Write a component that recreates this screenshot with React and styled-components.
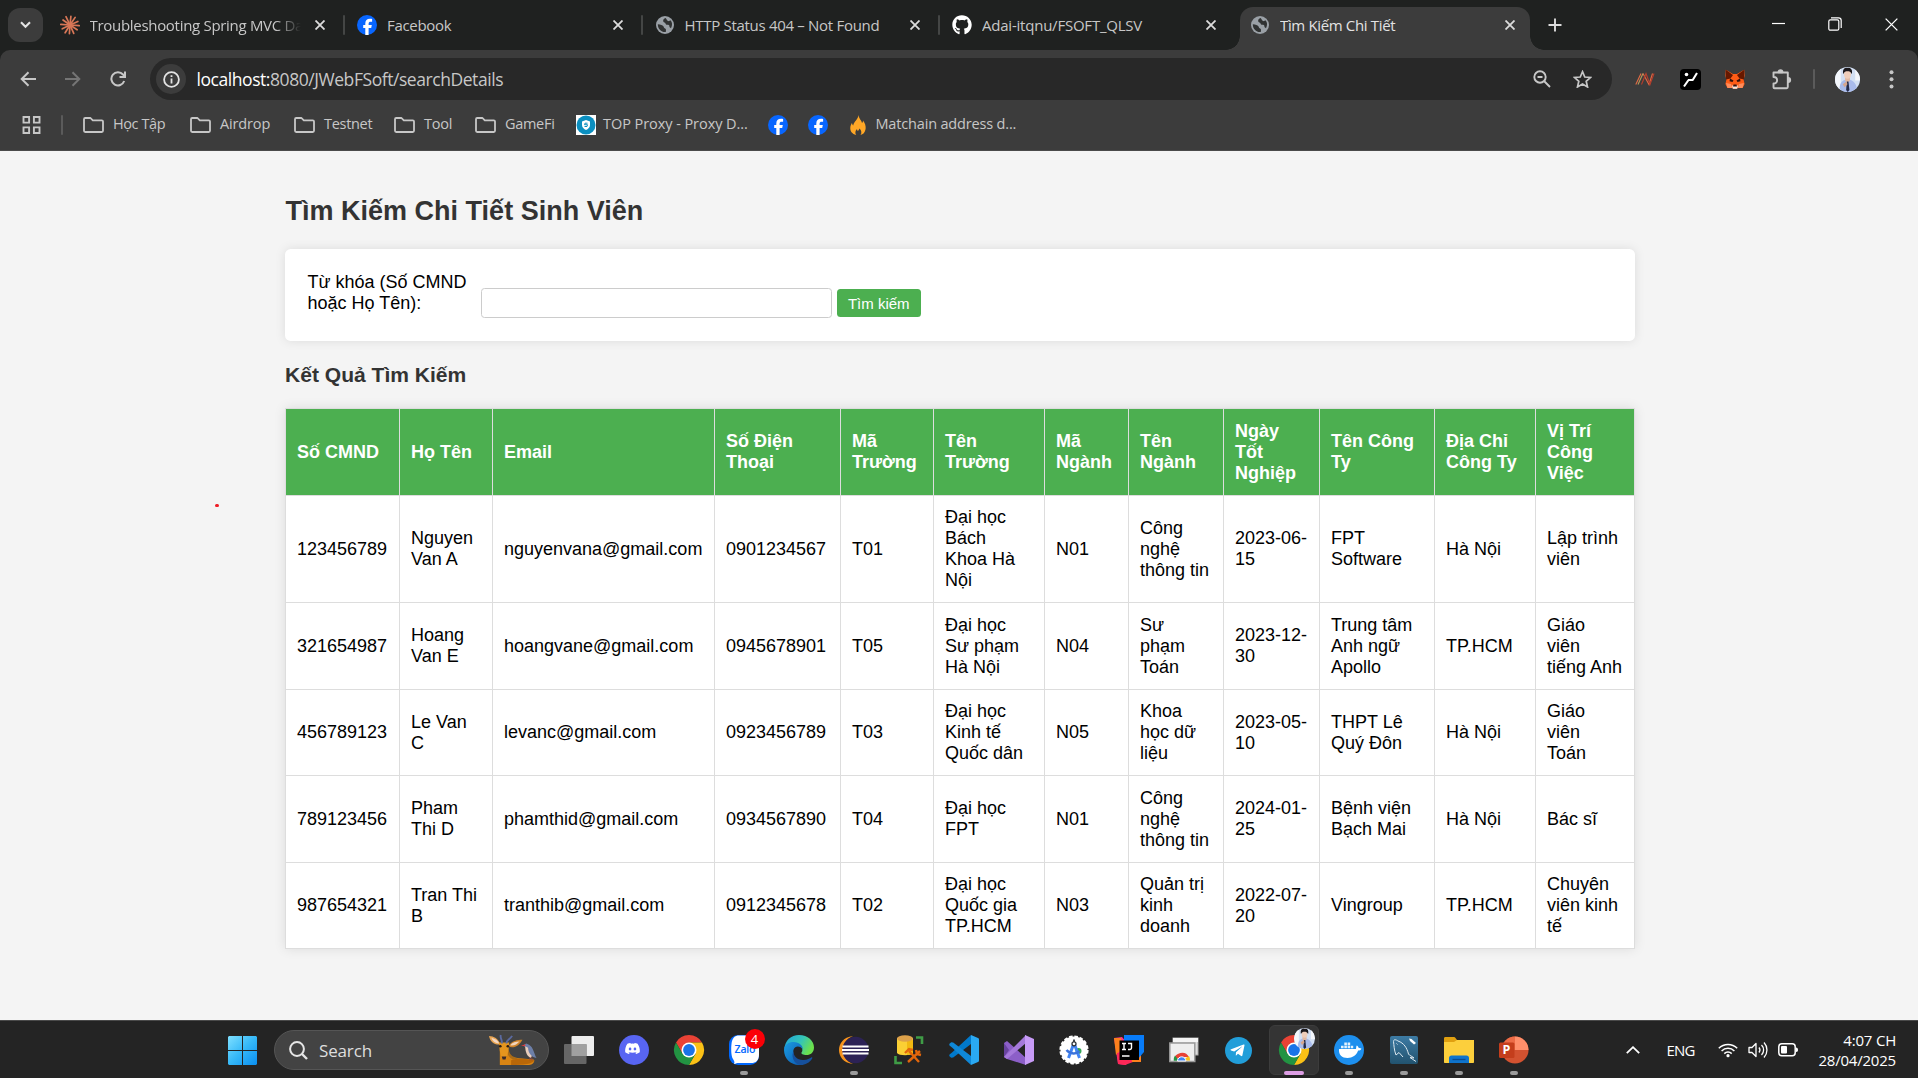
import React from "react";
import styled, { createGlobalStyle, css } from "styled-components";
import { FaGithub, FaDiscord, FaTelegramPlane, FaDocker } from "react-icons/fa";

const GlobalStyle = createGlobalStyle`
  html, body { margin: 0; padding: 0; overflow: hidden; }
  *, *::before, *::after { box-sizing: border-box; }
  svg { display: block; flex: none; }
`;

const uiFont = '"Open Sans", "Noto Sans", sans-serif';
const pageFont = '"Liberation Sans", Arial, sans-serif';

const Screen = styled.div`
  width: 1918px;
  height: 1078px;
  display: flex;
  flex-direction: column;
  background: #f4f4f4;
  font-family: ${uiFont};
`;

/* ---------- browser chrome ---------- */

const TabStrip = styled.div`
  height: 50px;
  display: flex;
  background: #1f2120;
`;

const TabSearch = styled.div`
  width: 35px;
  height: 34px;
  margin: 8px 3.5px 0 8px;
  border-radius: 12px;
  background: #3c3c3c;
  display: grid;
  place-items: center;
`;

const TabBox = styled.div`
  position: relative;
  flex: none;
  width: ${(p) => p.$w || 297.5}px;
  height: ${(p) => (p.$active ? 43 : 50)}px;
  margin-top: ${(p) => (p.$active ? 7 : 0)}px;
  margin-left: ${(p) => p.$ml || 0}px;
  padding: ${(p) => (p.$active ? "0 15px 7px 10px" : "0 19px 0 13px")};
  display: flex;
  align-items: center;
  color: ${(p) => (p.$active ? "#e3e3e3" : "#c7c7c7")};
  ${(p) =>
    p.$active
      ? css`
          background: #3c3c3c;
          border-radius: 13px 13px 0 0;
          &::before,
          &::after {
            content: "";
            position: absolute;
            bottom: 0;
            width: 14px;
            height: 14px;
          }
          &::before {
            left: -14px;
            background: radial-gradient(circle at 0 0, transparent 13.5px, #3c3c3c 14px);
          }
          &::after {
            right: -14px;
            background: radial-gradient(circle at 100% 0, transparent 13.5px, #3c3c3c 14px);
          }
        `
      : ""}
  ${(p) =>
    p.$divider
      ? css`
          &::after {
            content: "";
            position: absolute;
            right: -1px;
            top: 15px;
            width: 2px;
            height: 20px;
            border-radius: 1px;
            background: #444645;
          }
        `
      : ""}
`;

const TabTitle = styled.span`
  flex: 1;
  margin-left: 10px;
  margin-right: 14px;
  font-size: 15px;
  letter-spacing: ${(p) => p.$ls ?? -0.3}px;
  white-space: nowrap;
  overflow: hidden;
  ${(p) =>
    p.$fade ? "-webkit-mask-image: linear-gradient(90deg, #000 88%, transparent 100%);" : ""}
`;

const NewTab = styled.div`
  width: 24px;
  margin-left: 13px;
  display: grid;
  place-items: center;
`;

const WindowButtons = styled.div`
  margin-left: auto;
  margin-right: -1.5px;
  display: flex;
  align-items: center;
  height: 48px;
`;

const WindowButton = styled.div`
  width: 56.5px;
  display: grid;
  place-items: center;
`;

const ToolbarBack = styled.div`
  background: #1f2120;
`;

const Toolbar = styled.div`
  height: 101px;
  background: #3c3c3c;
  border-radius: 10px 10px 0 0;
  display: flex;
  flex-direction: column;
  border-bottom: 1px solid #4a4a4a;
`;

const NavRow = styled.div`
  height: 50px;
  padding-top: 8px;
  display: flex;
`;

const NavIcon = styled.div`
  flex: none;
  width: ${(p) => p.$w || 45}px;
  height: 42px;
  display: grid;
  place-items: center;
`;

const NavButtons = styled.div`
  flex: none;
  width: 150px;
  padding-left: 5px;
  display: flex;
`;

const Omnibox = styled.div`
  flex: none;
  width: 1462px;
  height: 42px;
  border-radius: 21px;
  background: #282828;
  display: flex;
  align-items: center;
  padding: 0 10px 0 6px;
`;

const SiteInfo = styled.div`
  width: 30px;
  height: 30px;
  border-radius: 50%;
  background: #3c3c3c;
  display: grid;
  place-items: center;
`;

const Url = styled.div`
  flex: 1;
  margin-left: 10.5px;
  font-size: 17.5px;
  line-height: 24px;
  letter-spacing: -0.44px;
  color: #c7c7c7;
  b {
    font-weight: 400;
    color: #fff;
  }
`;

const Extensions = styled.div`
  flex: none;
  display: flex;
  align-items: center;
  height: 42px;
  margin-left: 10.5px;
`;

const BookmarkBar = styled.div`
  height: 50px;
  display: flex;
  align-items: center;
  padding-left: 22px;
`;

const BarDivider = styled.div`
  width: 2px;
  height: 20px;
  border-radius: 1px;
  background: #5b5b5b;
  margin: ${(p) => p.$m || "0"};
`;

const Bookmark = styled.div`
  width: ${(p) => p.$w}px;
  display: flex;
  align-items: center;
  gap: ${(p) => p.$gap ?? 9.5}px;
  font-size: 14.5px;
  line-height: 18px;
  letter-spacing: ${(p) => p.$ls ?? -0.3}px;
  white-space: nowrap;
  color: #c7c7c7;
`;

const BookmarkName = styled.span`
  margin-top: -2px;
`;

/* ---------- web page ---------- */

const Page = styled.main`
  position: relative;
  height: 869px;
  padding: 22.5px 0 0 285px;
  background: #f4f4f4;
  font-family: ${pageFont};
  font-size: 18px;
  line-height: 21px;
  color: #000;
`;

const Container = styled.div`
  width: 1350px;
  display: flex;
  flex-direction: column;
`;

const Heading = styled.h2`
  margin: 22.4px 0;
  padding-left: 0.6px;
  font-size: 27px;
  line-height: 31px;
  color: #333;
`;

const SubHeading = styled.h3`
  margin: 21.3px 0 21.7px;
  font-size: 21.06px;
  line-height: 24px;
  color: #333;
`;

const SearchForm = styled.form`
  height: 92px;
  padding: 22.5px;
  display: flex;
  align-items: flex-start;
  background: #fff;
  border-radius: 5.6px;
  box-shadow: 0 0 11px rgba(0, 0, 0, 0.1);
`;

const FieldLabel = styled.label`
  width: 168.75px;
  margin-right: 5px;
`;

const TextInput = styled.input`
  width: 350.5px;
  height: 30px;
  margin: 16px 5px 0 0;
  padding: 5px;
  border: 1px solid #ccc;
  border-radius: 3.5px;
  font: 15px ${pageFont};
  outline: none;
`;

const SubmitButton = styled.button`
  width: 84px;
  height: 28px;
  margin-top: 17.5px;
  padding: 0;
  border: 0;
  border-radius: 3.5px;
  background: #4caf50;
  color: #fff;
  font: 15px ${pageFont};
`;

const Table = styled.table`
  width: 1350px;
  table-layout: fixed;
  border-collapse: collapse;
  background: #fff;
  box-shadow: 0 0 11px rgba(0, 0, 0, 0.1);
`;

const Row = styled.tr`
  height: ${(p) => p.$h}px;
`;

const cell = css`
  padding: 0 0 0 11px;
  border: 1px solid #ddd;
  text-align: left;
  vertical-align: middle;
  white-space: pre;
`;

const HeadCell = styled.th`
  ${cell}
  background: #4caf50;
  color: #fff;
`;

const Cell = styled.td`
  ${cell}
`;

const LaserDot = styled.span`
  position: absolute;
  left: 215px;
  top: 352.5px;
  width: 3.5px;
  height: 3.5px;
  border-radius: 50%;
  background: #ee1c25;
`;

/* ---------- taskbar ---------- */

const Taskbar = styled.footer`
  height: 58px;
  display: flex;
  align-items: center;
  background: #242424;
  border-top: 1px solid #4a4a4a;
  padding: 1px 22px 0 228px;
`;

const SearchBox = styled.div`
  width: 275px;
  height: 40px;
  margin-left: 17px;
  margin-right: 2px;
  padding: 0 10px 0 14px;
  border-radius: 20px;
  border: 1px solid #555;
  background: #434343;
  display: flex;
  align-items: center;
  gap: 11px;
  color: #dedede;
  font-size: 17px;
  letter-spacing: -0.15px;
  svg:last-child {
    margin-left: auto;
  }
`;

const AppSlot = styled.div`
  position: relative;
  flex: none;
  width: 55px;
  height: 50px;
  display: grid;
  place-items: center;
  &::before {
    content: "";
    position: absolute;
    inset: 0 2.5px;
    border-radius: 6px;
    background: ${(p) => (p.$active ? "#343434" : "transparent")};
    border: 1px solid ${(p) => (p.$active ? "#3c3c3c" : "transparent")};
  }
  &::after {
    content: "";
    position: absolute;
    bottom: 0.5px;
    width: ${(p) => (p.$active ? 20 : p.$open ? 8 : 0)}px;
    height: 4px;
    border-radius: 2px;
    background: ${(p) => (p.$active ? "#dd9ee4" : "#9a9a9a")};
  }
  svg {
    position: relative;
    overflow: visible;
  }
`;

const Badge = styled.span`
  position: absolute;
  left: 28.5px;
  top: 4px;
  width: 20px;
  height: 20px;
  border-radius: 50%;
  background: #fb0007;
  color: #fff;
  font-size: 13px;
  line-height: 20px;
  text-align: center;
`;

const Tray = styled.div`
  margin-left: auto;
  display: flex;
  align-items: center;
  color: #fff;
  font-size: 15px;
`;

const Language = styled.span`
  margin: 0 17.5px 0 26.5px;
  width: 34px;
  font-size: 15px;
  letter-spacing: -0.8px;
`;

const TrayIcons = styled.div`
  display: flex;
  align-items: center;
  gap: 10px;
`;

const Clock = styled.div`
  width: 98px;
  text-align: right;
  line-height: 20px;
  font-size: 15px;
  letter-spacing: -0.2px;
  margin-top: -1px;
`;

/* ---------- icons ---------- */

const Claude = () => (
  <svg width="20" height="20" viewBox="-10 -10 20 20" stroke="#d97757" strokeWidth="1.7" strokeLinecap="round">
    {[0, 30, 62, 90, 118, 150, 180, 212, 240, 272, 300, 332].map((a, i) => (
      <line key={a} x1="0" y1="0" x2={i % 2 ? 8.6 : 9.2} y2="0" transform={`rotate(${a + 4})`} />
    ))}
  </svg>
);

const Facebook = () => (
  <svg width="20" height="20" viewBox="0 0 20 20">
    <circle cx="10" cy="10" r="10" fill="#0866ff" />
    <path d="M8.3 20v-6.9H6.2v-3h2.1V8.7c0-3.3 1.5-4.9 4.8-4.9.6 0 1.5.1 2 .3v2.7h-1.2c-1.7 0-2.3.6-2.3 2.2v1.1h3.2l-.6 3h-2.6V20z" fill="#fff" />
  </svg>
);

const Globe = () => (
  <svg width="20" height="20" viewBox="0 0 20 20">
    <circle cx="10" cy="10" r="9" fill="#9aa0a6" />
    <path d="M2.8 9.2c3 .2 4.6.8 5.6 2 .8 1 .2 1.8 1.7 2.2 1.2.3.9 1.6.7 3.6-4.5.4-8-3-8-7.8zM10.7 3c-1.8.7-2.8 1.8-2.5 3.2.3 1.3 2 1 2.3 2.2.3 1.1 1 1.5 2.2 1.3 1.5-.2 2 1 1.7 2.3l1.6 1.2c1.5-2.7 1.4-5.5-.2-7.6-1.3 0-1.6.8-2.7.5-1.3-.4-1.3-2-2.4-3.1z" fill="#303232" />
  </svg>
);

const Close = ({ size = 10, w = 1.8, color = "#dcdcdc" }) => (
  <svg width={size} height={size} viewBox="0 0 10 10" stroke={color} strokeWidth={w}>
    <path d="M.5.5l9 9M9.5.5l-9 9" />
  </svg>
);

const Folder = () => (
  <svg width="21" height="16" viewBox="0 0 21 16" fill="none" stroke="#c7c7c7" strokeWidth="1.8" strokeLinejoin="round">
    <path d="M1 2.2C1 1.5 1.5 1 2.2 1h5.3l2.3 2.4h9c.7 0 1.2.5 1.2 1.2v9.2c0 .7-.5 1.2-1.2 1.2H2.2C1.5 15 1 14.5 1 13.8z" />
  </svg>
);

const Portrait = ({ size }) => (
  <svg width={size} height={size} viewBox="0 0 26 26">
    <defs>
      <clipPath id={`face${size}`}>
        <circle cx="13" cy="13" r="13" />
      </clipPath>
    </defs>
    <g clipPath={`url(#face${size})`}>
      <path fill="#d3e0f4" d="M0 0h26v26H0z" />
      <path fill="#f4f7fc" d="M0 0h6v26H0zM21 2h5v12h-5z" />
      <path d="M5 26c-1-8 1-12 8-13.500 7 1.500 10 5.500 10 13.500z" fill="#a9bbec" />
      <path d="M10.500 10h5v4l-2.500 3-2.500-3z" fill="#e2b9a2" />
      <ellipse cx="13" cy="7.500" rx="3.600" ry="4.600" fill="#efcdb9" />
      <path d="M8.600 7.500C7.500 2 10 .5 13 .8c3.800-.3 5.500 2 4.500 6.700-1-2.500-2.600-3-4.500-3s-3.500.5-4.400 3z" fill="#1c191c" />
      <path d="M12.300 15l1.700 0 1 9-1.800 2-1.600-2z" fill="#242a4a" />
      <path d="M8 18l4-3 1 3-3 3z" fill="#d6a68e" />
    </g>
  </svg>
);

const Chrome = ({ size = 30 }) => (
  <svg width={size} height={size} viewBox="0 0 30 30">
    <path d="M2 7.500A15 15 0 0 1 28 7.500H15L8.500 18.750z" fill="#e94235" />
    <path d="M28 7.500A15 15 0 0 1 15 30L21.500 18.750 15 7.500z" fill="#fbc116" />
    <path d="M15 30A15 15 0 0 1 2 7.500L8.500 18.750H21.500z" fill="#229342" />
    <circle cx="15" cy="15" r="7.500" fill="#fff" />
    <circle cx="15" cy="15" r="5.900" fill="#1a73e8" />
  </svg>
);

const Fox = () => (
  <svg width="20" height="20" viewBox="0 0 20 20">
    <path d="M.8.8L8 5h4l7.200-4.200.4 6-1 4 1 4.200-2 4-4-1-2 2H8.400l-2-2-4 1-2-4 1-4.200-1-4z" fill="#ff5c16" />
    <path d="M.8.8L8 6 5.500 9.500 1 10.500zM19.200.8L12 6l2.500 3.500 4.500 1z" fill="#661800" />
    <path d="M5 9.500l3.500 2-1 1.500-3-.8zM15 9.500l-3.500 2 1 1.500 3-.8z" fill="#33110d" />
    <path d="M1 14l5 1 1.500 4-5 0zM19 14l-5 1-1.500 4 5 0z" fill="#ff8d5d" />
    <path d="M7 16.500h6l-.8 3.200H7.800z" fill="#f2e6df" />
    <path d="M8.500 15.500h3l.5 2H8z" fill="#33110d" />
  </svg>
);

const Win = () => (
  <svg width="29" height="29" viewBox="0 0 29 29">
    <defs>
      <linearGradient id="win" x1="0" y1="0" x2="1" y2="1">
        <stop offset="0" stopColor="#7fe0ff" />
        <stop offset=".5" stopColor="#35b8f8" />
        <stop offset="1" stopColor="#0a8ef0" />
      </linearGradient>
    </defs>
    <path d="M1 0h13v14H0V1zM15 0h13l1 1v13H15zM0 15h14v14H1l-1-1zM15 15h14v13l-1 1H15z" fill="url(#win)" />
  </svg>
);

const Deer = () => (
  <svg width="50" height="32" viewBox="0 0 52 34">
    <path d="M12 33V15h9c1 8 5 11 15 11l12 1c2 3-2 6-6 6z" fill="#d98412" />
    <path d="M20 14c2 7 5 11 12 12l-6 1c-5-2-7-7-6-13z" fill="#242424" fillOpacity=".25" />
    <path d="M24 28c8-3 18-1 25 0-2 4-12 5-25 5z" fill="#b96708" />
    <path d="M.5 2c5 0 10 3 12 9-6 1-11-3-12-9z" fill="#e9a552" />
    <path d="M3 4c4 1 7 3 8.500 6C7 10 4.500 8 3 4z" fill="#f4d8c4" />
    <path d="M36 6c-5 0-12 1-15 7 6 3 12-1 15-7z" fill="#cf842b" />
    <path d="M33 8c-4 0-8 1-10 4 4 1 7-1 10-4z" fill="#f2d5bd" />
    <path d="M11 9h11l-1 9-2 8h-5l-2-8z" fill="#e5951e" />
    <path d="M14 10C15 6 12 5 13 1M19 10c0-4 4-4 6-8" stroke="#5b6aa0" strokeWidth="2" fill="none" />
    <circle cx="12.500" cy="13" r="1.400" fill="#2b1a10" />
    <circle cx="20.500" cy="13" r="1.400" fill="#2b1a10" />
    <path d="M14 24h5l-1 3h-3z" fill="#3b2a2a" />
    <path d="M37 12l3-2 3 1.500c5 3 5 9 8 14-5-1-9-4-10-9z" fill="#6d7fa8" />
    <path d="M39 13c0 6 2 11 6 12.500l1-2c-3-3-4-6-4-9z" fill="#e9cdbb" />
    <path d="M34.500 12.500l4.500-1.500v2z" fill="#e23b3b" />
    <path d="M44 25v3M46 25v3" stroke="#9c4a3a" />
  </svg>
);

const TaskView = () => (
  <svg width="30" height="28" viewBox="0 0 30 28">
    <rect x="7.500" y="0" width="22.500" height="20" rx="1" fill="#ededed" />
    <rect x="0" y="8" width="22.500" height="20" rx="1" fill="#666" />
    <rect x="7.500" y="8" width="15" height="12" fill="#a0a0a0" />
  </svg>
);

const Discord = () => (
  <svg width="30" height="30" viewBox="0 0 30 30">
    <circle cx="15" cy="15" r="15" fill="#5865f2" />
    <FaDiscord x="5.500" y="5.500" width="19" height="19" color="#fff" />
  </svg>
);

const Zalo = () => (
  <svg width="30" height="30" viewBox="0 0 30 30">
    <rect width="30" height="30" rx="9" fill="#0068ff" />
    <path d="M2.500 9C3 3 6 .5 10 .5h12c6 0 8 3 8 8v11c0 6-3 8.500-8 8.500H10c-2 0-3 .5-5 1 1-2 0-3-1-5-2-3-2-11-1.500-15z" fill="#fff" />
    <text x="5.500" y="17.500" fontFamily="Open Sans" fontWeight="600" fontSize="10.500" fill="#0068ff" textLength="21">
      Zalo
    </text>
  </svg>
);

const Edge = () => (
  <svg width="30" height="30" viewBox="0 0 30 30">
    <defs>
      <linearGradient id="eg1" x1="0" y1="0" x2="1" y2=".4">
        <stop offset="0" stopColor="#1fa5dd" />
        <stop offset=".6" stopColor="#35c5b6" />
        <stop offset="1" stopColor="#6be04d" />
      </linearGradient>
      <linearGradient id="eg2" x1="0" y1="0" x2="1" y2="1">
        <stop offset="0" stopColor="#1b9de2" />
        <stop offset="1" stopColor="#0b57b0" />
      </linearGradient>
    </defs>
    <path d="M.3 14C1 5.500 7 0 15 0c9 0 15 6 15 12.500 0 5-3.500 7.500-7.500 7.500-3.500 0-5.500-1-5-2.500 1.500-1.500 1.500-6-4-8C8 8 2 10 .3 14z" fill="url(#eg1)" />
    <path d="M0 15C0 9.500 5 7 9.500 7c6 0 9.500 4 9.300 7.500-1-2-3-3-5-3-4 0-5 4-4.300 7.500C10.500 24 15 28 19 29.500 9 32 0 25 0 15z" fill="url(#eg2)" />
    <path d="M9.700 16c-.8 5 4 9.500 10 9 3.500-.2 6-1.500 7.500-2.500.8-.5 1.400.2 1 1C25.500 28 20 30.500 16 30 9 28.500 7 20 9.700 16z" fill="#16509c" />
  </svg>
);

const Eclipse = () => (
  <svg width="30" height="28" viewBox="0 0 30 28">
    <path d="M14 0C4 1 0 8 0 14s4 13 14 14C7 25 4 20 4 14S7 3 14 0z" fill="#f7941e" />
    <circle cx="16.500" cy="14" r="13.200" fill="#2c2255" />
    <path d="M3.500 10.500h26M3 14h27M3.500 17.500h26" stroke="#fff" strokeWidth="2" />
  </svg>
);

const Database = () => (
  <svg width="30" height="30" viewBox="0 0 30 30">
    <path d="M3 3v15c2 3 14 3 16 0V3z" fill="#fbd034" />
    <path d="M13 5h6v14l-6 1z" fill="#f2b911" />
    <ellipse cx="11" cy="3.500" rx="8" ry="3.200" fill="#dda14a" />
    <path d="M22 2.500h6V9M1.500 21v7h6.500" stroke="#3f9c46" strokeWidth="2.600" fill="none" />
    <path d="M11 18l4-4 4 1M15 16l10 11M26 16L14 27M22 15l1 4 4 1" stroke="#e2660c" strokeWidth="2.400" fill="none" />
  </svg>
);

const VSCode = () => (
  <svg width="30" height="30" viewBox="0 0 30 30">
    <path d="M22 0L3 17.500.5 19.500.2 21l2 1.800 2-.2L22 9z" fill="#0179cb" />
    <path d="M22 30L3 12.500.5 10.500.2 9l2-1.800 2 .2L22 21z" fill="#0f88d8" />
    <path d="M22 0l7 3c.7.300 1 .8 1 1.500v21c0 .7-.3 1.200-1 1.500l-7 3z" fill="#2aa9f3" />
  </svg>
);

const VisualStudio = () => (
  <svg width="30" height="30" viewBox="0 0 30 30">
    <path d="M0 8l3-2 19 17v7L3 24l-3-2z" fill="#8c5fc8" />
    <path d="M0 8l5 7-5 7z" fill="#68439f" />
    <path d="M22 0v8L3 24l-3-2z" fill="#a579db" />
    <path d="M21 0l9 4v22l-9 4z" fill="#c79bf7" />
  </svg>
);

const AndroidStudio = () => (
  <svg width="30" height="30" viewBox="0 0 30 30">
    <circle cx="15" cy="15" r="13.500" fill="#fff" />
    <circle cx="15" cy="15" r="13.500" fill="none" stroke="#fff" strokeWidth="2.200" strokeDasharray="3.500 1.800" />
    <circle cx="19.500" cy="16" r="3" fill="#34a853" />
    <path d="M15 8L9.500 23M15 8l5.500 15" stroke="#4285f4" strokeWidth="3" />
    <path d="M7.500 15c4 4.500 10 4.500 13 1" stroke="#3b73db" strokeWidth="2.500" fill="none" />
    <circle cx="15" cy="8.800" r="2" fill="#fff" stroke="#30343a" strokeWidth="1.300" />
    <path d="M15 4.500v2.500" stroke="#30343a" strokeWidth="1.800" />
  </svg>
);

const IntelliJ = () => (
  <svg width="30" height="30" viewBox="0 0 30 30">
    <path d="M0 3l8-1 10 12-6 16-8-1z" fill="#ff318c" />
    <path d="M0 3l7 0 2 10-7 7z" fill="#fc801d" />
    <path d="M3 18l15-2 1 11-8 3-7-1z" fill="#fe2857" />
    <path d="M17 18h10v9h-9z" fill="#fc801d" />
    <path d="M10 0h20v17l-7 8-13-10z" fill="#087cfa" />
    <path d="M5.500 5.500h19.500v19.500H5.500z" fill="#000" />
    <path d="M8 8.500h4M10 8.500v6M8 14.500h4M14 8.500h3.500v4.500c0 1.200-1.500 1.700-3.500 1.500M8 21h7.500" stroke="#fff" strokeWidth="1.400" fill="none" />
  </svg>
);

const RemoteDesktop = () => (
  <svg width="30" height="26" viewBox="0 0 30 26">
    <rect x="4" y="1" width="25" height="17" fill="#ddd" stroke="#a8a8a8" />
    <path d="M4 1h25v4H4z" fill="#f4f4f4" />
    <rect x=".8" y="6" width="25" height="18.500" fill="#eee" stroke="#999" strokeWidth="1.500" />
    <path d="M5 23a8 8 0 0 1 15-3h-8z" fill="#e94235" />
    <path d="M20 19a8 8 0 0 1 1 4.500h-8z" fill="#fbc116" />
    <path d="M4.700 23.700A8 8 0 0 1 6 18.500l4 5.200z" fill="#229342" />
    <path d="M8.500 24a4.200 4.200 0 0 1 8.400 0z" fill="#4285f4" stroke="#fff" />
  </svg>
);

const Telegram = () => (
  <svg width="27" height="27" viewBox="0 0 27 27">
    <circle cx="13.500" cy="13.500" r="13.500" fill="#229ed9" />
    <FaTelegramPlane x="4.500" y="5.500" width="16" height="16" color="#fff" />
  </svg>
);

const ProfileChrome = () => (
  <svg width="30" height="30" viewBox="0 0 30 30">
    <Chrome />
    <g transform="translate(15 -7)">
      <Portrait size={21} />
    </g>
  </svg>
);

const Docker = () => (
  <svg width="30" height="30" viewBox="0 0 30 30">
    <circle cx="15" cy="15" r="15" fill="#1d8fee" />
    <path d="M5 14h17c.3-1.300 0-2.300.8-3.500 1.200.7 1.700 1.500 1.900 2.600 1-.1 2 0 2.800.6-.7 1.300-1.800 1.900-3.400 1.900C22.500 20.500 18.500 23 13.500 23 8 23 4.500 20 5 14z" fill="#fff" />
    <path d="M7 10.700h2.600v2.600H7zM10.300 10.700h2.600v2.600h-2.600zM13.600 10.700h2.600v2.600h-2.600zM16.900 10.700h2.300v2.600h-2.300zM10.300 7.600h2.600v2.600h-2.600zM13.600 7.600h2.600v2.600h-2.600z" fill="#e4f2fd" />
  </svg>
);

const MySQL = () => (
  <svg width="28" height="28" viewBox="0 0 28 28">
    <defs>
      <linearGradient id="my" x1="0" y1="0" x2="0" y2="1">
        <stop offset="0" stopColor="#3d7ba4" />
        <stop offset="1" stopColor="#22536f" />
      </linearGradient>
    </defs>
    <rect width="28" height="28" rx="2" fill="url(#my)" />
    <path d="M6 19C4 14 4 9 3.500 5.500 3.500 3 6 3.500 8 5c6 2 9 7 10.500 13 1 2 4 2 5.500 4l-4-.5 6 4M6 19l3-2.500L13 21M6.500 7.500l1 1" stroke="#dbe8ef" strokeWidth="1" fill="none" />
    <path d="M19 2.500l2.500.5 4.500 4-2 1.500-4-3.500z" fill="#fff" />
  </svg>
);

const Explorer = () => (
  <svg width="30" height="27" viewBox="0 0 30 27">
    <path d="M0 1.500C0 .5.500 0 1.500 0h8c1 0 1.500.3 2 1l1.500 2v6H0z" fill="#e0a010" />
    <path d="M0 5h10l3-2h17v22c0 .6-.4 1-1 1H1c-.6 0-1-.4-1-1z" fill="#fccf3c" />
    <path d="M5 26v-5c0-1.500 1-2.500 2.500-2.500h15c1.500 0 2.500 1 2.500 2.500v5z" fill="#0f74cc" />
    <path d="M8.500 22.500h13" stroke="#094b91" strokeWidth="1.300" />
  </svg>
);

const PowerPoint = () => (
  <svg width="30" height="28" viewBox="0 0 30 28">
    <circle cx="16" cy="14" r="13.500" fill="#d35230" />
    <path d="M16 .5A13.500 13.500 0 0 1 29.500 14H16z" fill="#ff8f6b" />
    <path d="M16 .5V14H2.500A13.500 13.500 0 0 1 16 .5z" fill="#ed6c47" />
    <rect x="0" y="6.500" width="15.500" height="15.500" rx="1.500" fill="#c43e1c" />
    <text x="7.500" y="18.300" textAnchor="middle" fontFamily="Open Sans" fontWeight="700" fontSize="12.500" fill="#fff">
      P
    </text>
  </svg>
);

/* ---------- data ---------- */

const tabs = [
  { icon: <Claude />, title: "Troubleshooting Spring MVC Data", fade: true, divider: true },
  { icon: <Facebook />, title: "Facebook", divider: true },
  { icon: <Globe />, title: "HTTP Status 404 – Not Found", divider: true },
  { icon: <FaGithub size={20} color="#fff" />, title: "Adai-itqnu/FSOFT_QLSV", w: 296, ls: -0.22 },
];

const folders = [
  ["Học Tập", 107, -0.4],
  ["Airdrop", 104, -0.15],
  ["Testnet", 100, -0.3],
  ["Tool", 81, -0.25],
  ["GameFi", 101, -0.3],
];

const columnWidths = [114, 93, 222, 126, 93, 111, 84, 95, 96, 115, 101, 99];

const headers = [
  "Số CMND", "Họ Tên", "Email", "Số Điện\nThoại", "Mã\nTrường", "Tên\nTrường",
  "Mã\nNgành", "Tên\nNgành", "Ngày\nTốt\nNghiệp", "Tên Công\nTy", "Địa Chỉ\nCông Ty", "Vị Trí\nCông\nViệc",
];

const students = [
  { h: 107, cells: ["123456789", "Nguyen\nVan A", "nguyenvana@gmail.com", "0901234567", "T01", "Đại học\nBách\nKhoa Hà\nNội", "N01", "Công\nnghệ\nthông tin", "2023-06-\n15", "FPT\nSoftware", "Hà Nội", "Lập trình\nviên"] },
  { h: 87, cells: ["321654987", "Hoang\nVan E", "hoangvane@gmail.com", "0945678901", "T05", "Đại học\nSư phạm\nHà Nội", "N04", "Sư\nphạm\nToán", "2023-12-\n30", "Trung tâm\nAnh ngữ\nApollo", "TP.HCM", "Giáo\nviên\ntiếng Anh"] },
  { h: 86, cells: ["456789123", "Le Van\nC", "levanc@gmail.com", "0923456789", "T03", "Đại học\nKinh tế\nQuốc dân", "N05", "Khoa\nhọc dữ\nliệu", "2023-05-\n10", "THPT Lê\nQuý Đôn", "Hà Nội", "Giáo\nviên\nToán"] },
  { h: 87, cells: ["789123456", "Pham\nThi D", "phamthid@gmail.com", "0934567890", "T04", "Đại học\nFPT", "N01", "Công\nnghệ\nthông tin", "2024-01-\n25", "Bệnh viện\nBạch Mai", "Hà Nội", "Bác sĩ"] },
  { h: 86, cells: ["987654321", "Tran Thi\nB", "tranthib@gmail.com", "0912345678", "T02", "Đại học\nQuốc gia\nTP.HCM", "N03", "Quản trị\nkinh\ndoanh", "2022-07-\n20", "Vingroup", "TP.HCM", "Chuyên\nviên kinh\ntế"] },
];

const apps = [
  { icon: <TaskView /> },
  { icon: <Discord /> },
  { icon: <Chrome /> },
  { icon: <Zalo />, open: true, badge: "4" },
  { icon: <Edge /> },
  { icon: <Eclipse />, open: true },
  { icon: <Database /> },
  { icon: <VSCode /> },
  { icon: <VisualStudio /> },
  { icon: <AndroidStudio /> },
  { icon: <IntelliJ /> },
  { icon: <RemoteDesktop /> },
  { icon: <Telegram /> },
  { icon: <ProfileChrome />, active: true },
  { icon: <Docker />, open: true },
  { icon: <MySQL />, open: true },
  { icon: <Explorer />, open: true },
  { icon: <PowerPoint />, open: true },
];

/* ---------- sections ---------- */

const Tabs = () => (
  <TabStrip>
    <TabSearch>
      <svg width="11" height="8" viewBox="0 0 11 8" fill="none" stroke="#e3e3e3" strokeWidth="2.1">
        <path d="M1 1.200l4.500 4.500L10 1.200" />
      </svg>
    </TabSearch>
    {tabs.map((t) => (
      <TabBox key={t.title} $w={t.w} $divider={t.divider}>
        {t.icon}
        <TabTitle $fade={t.fade} $ls={t.ls}>{t.title}</TabTitle>
        <Close />
      </TabBox>
    ))}
    <TabBox $active $w={290} $ml={5}>
      <Globe />
      <TabTitle $ls={-0.35}>Tìm Kiếm Chi Tiết</TabTitle>
      <Close />
    </TabBox>
    <NewTab>
      <svg width="14" height="14" viewBox="0 0 14 14" stroke="#dcdcdc" strokeWidth="1.9">
        <path d="M7 .5v13M.5 7h13" />
      </svg>
    </NewTab>
    <WindowButtons>
      <WindowButton>
        <svg width="13" height="12" stroke="#fff" strokeWidth="1.2">
          <path d="M0 5.500h13" />
        </svg>
      </WindowButton>
      <WindowButton>
        <svg width="14" height="14" viewBox="0 0 14 14" fill="none" stroke="#fff" strokeWidth="1.2">
          <rect x=".8" y="2.800" width="10" height="10.400" rx="1.500" />
          <path d="M3 .8h7.500c1.500 0 2.700 1.200 2.700 2.700V11" />
        </svg>
      </WindowButton>
      <WindowButton>
        <Close size={13} w={1} color="#fff" />
      </WindowButton>
    </WindowButtons>
  </TabStrip>
);

const arrow = "M16 8H2M8.500 1.200L1.700 8l6.800 6.800";

const BrowserBar = () => (
  <ToolbarBack>
    <Toolbar>
      <NavRow>
        <NavButtons>
          <NavIcon>
            <svg width="16" height="16" viewBox="0 0 16 16" fill="none" stroke="#c7c7c7" strokeWidth="2">
              <path d={arrow} />
            </svg>
          </NavIcon>
          <NavIcon>
            <svg width="16" height="16" viewBox="0 0 16 16" fill="none" stroke="#757575" strokeWidth="2">
              <path d={arrow} transform="matrix(-1 0 0 1 16 0)" />
            </svg>
          </NavIcon>
          <NavIcon>
            <svg width="16" height="16" viewBox="0 0 16 16" fill="none" stroke="#c7c7c7" strokeWidth="2">
              <path d="M14.200 10A6.600 6.600 0 1 1 13 3.500L14.500 5.500M15 .5V6H9.500" />
            </svg>
          </NavIcon>
        </NavButtons>
        <Omnibox>
          <SiteInfo>
            <svg width="17" height="17" viewBox="0 0 17 17" fill="none" stroke="#e3e3e3" strokeWidth="1.8">
              <circle cx="8.500" cy="8.500" r="7.400" />
              <path d="M8.500 7.500v5M8.500 4.200V6" />
            </svg>
          </SiteInfo>
          <Url>
            <b>localhost:</b>8080/JWebFSoft/searchDetails
          </Url>
          <NavIcon $w={40}>
            <svg width="18" height="18" viewBox="0 0 18 18" fill="none" stroke="#c7c7c7" strokeWidth="1.9">
              <circle cx="7" cy="7" r="5.700" />
              <path d="M11 11l6 6M4.500 7h5" />
            </svg>
          </NavIcon>
          <NavIcon $w={40}>
            <svg width="19" height="18" viewBox="0 0 20 19" fill="none" stroke="#c7c7c7" strokeWidth="1.8">
              <path d="M10 1.800l2.400 5.600 6.100.5-4.600 4 1.400 6L10 14.700 4.700 17.900l1.400-6-4.600-4 6.100-.5z" />
            </svg>
          </NavIcon>
        </Omnibox>
        <Extensions>
          <NavIcon>
            <svg width="20" height="14" viewBox="0 0 20 14" fill="none" strokeWidth="1.1">
              <path d="M.8 12.500L6 1.500M8 1.500l6 11L17.500 1.500" stroke="#e26a45" />
              <path d="M6.500 12.500L11 1.500l4 11L19 1.500" stroke="#b83d2b" />
              <path d="M3 12.500L8 1.500" stroke="#b59a5c" />
            </svg>
          </NavIcon>
          <NavIcon>
            <svg width="21" height="21" viewBox="0 0 21 21">
              <rect width="21" height="21" rx="4" fill="#000" />
              <circle cx="6.500" cy="5.500" r="1.800" fill="#fff" />
              <path d="M17 4l-4 6.500M8 11h5.500M8.500 11l-4.500 6.500" stroke="#fff" strokeWidth="2.100" fill="none" />
            </svg>
          </NavIcon>
          <NavIcon>
            <Fox />
          </NavIcon>
          <NavIcon $w={47}>
            <svg width="21" height="21" viewBox="0 0 21 21" fill="none" stroke="#c7c7c7" strokeWidth="1.9" strokeLinejoin="round">
              <path d="M2.500 3.500h14.300v14.500c0 .7-.5 1.200-1.200 1.200H3.500c-.6 0-1-.4-1-1v-3.700c2.300 0 3.600-1.300 3.600-3.200S4.800 8 2.500 8z" />
              <path d="M7.500 3.200a2 2 0 0 1 4 0zM17.200 9a2 2 0 0 1 0 4z" fill="#c7c7c7" />
            </svg>
          </NavIcon>
          <BarDivider $m="0 20px 0 8px" />
          <Portrait size={25} />
          <NavIcon $w={64}>
            <svg width="5" height="19" fill="#c7c7c7">
              <circle cx="2.500" cy="2.200" r="2" />
              <circle cx="2.500" cy="9.300" r="2" />
              <circle cx="2.500" cy="16.400" r="2" />
            </svg>
          </NavIcon>
        </Extensions>
      </NavRow>
      <BookmarkBar>
        <svg width="19" height="18" viewBox="0 0 19 18" fill="none" stroke="#c7c7c7" strokeWidth="1.9">
          <path d="M1.500 1h5.600v5.600H1.500zM11.900 1h5.600v5.600h-5.600zM1.500 11.400h5.600V17H1.500zM11.900 11.400h5.600V17h-5.600z" />
        </svg>
        <BarDivider $m="0 20px 0 19.500px" />
        {folders.map(([name, w, ls]) => (
          <Bookmark key={name} $w={w} $ls={ls}>
            <Folder />
            <BookmarkName>{name}</BookmarkName>
          </Bookmark>
        ))}
        <Bookmark $w={192} $gap={7.5} $ls={-0.06}>
          <svg width="20" height="20" viewBox="0 0 20 20">
            <path fill="#fff" d="M0 0h20v20H0z" />
            <circle cx="10" cy="10" r="9.500" fill="#0b8fc0" />
            <path d="M10 5l4 1.500v3.500c0 2.500-2 4-4 5-2-1-4-2.500-4-5V6.500z" fill="#fff" />
            <path d="M11.500 8.200H9l-.5 1.500h3l-.5 1.800H8.500" stroke="#0b8fc0" fill="none" />
          </svg>
          <BookmarkName>TOP Proxy - Proxy D...</BookmarkName>
        </Bookmark>
        <Bookmark $w={40}>
          <Facebook />
        </Bookmark>
        <Bookmark $w={42}>
          <Facebook />
        </Bookmark>
        <Bookmark $w={200} $gap={10} $ls={-0.17}>
          <svg width="16" height="20" viewBox="0 0 16 20">
            <path d="M8.500 0c.5 4 3 5 3.500 8 .8-.5 1-1.500 1-2.500 2 2.500 3 5.500 2.600 8.500-.5 3.500-2.600 5.500-5.100 6 1.500-2 1-4.500-1-6.500-.5 1-.7 1.800-1.700 2.500-.6-.6-.8-1.300-.8-2-2 2-2 4.300-.8 6C2 19 0 16 .3 12.500c.2-2 1-3.500 1.700-4.500.2 1.200.5 2 1.200 2.500C4 6 8 5 8.500 0z" fill="#ffa726" />
          </svg>
          <BookmarkName>Matchain address d...</BookmarkName>
        </Bookmark>
      </BookmarkBar>
    </Toolbar>
  </ToolbarBack>
);

const StudentSearch = () => (
  <Page>
    <Container>
      <Heading>Tìm Kiếm Chi Tiết Sinh Viên</Heading>
      <SearchForm onSubmit={(e) => e.preventDefault()}>
        <FieldLabel htmlFor="keyword">
          Từ khóa (Số CMND
          <br />
          hoặc Họ Tên):
        </FieldLabel>
        <TextInput id="keyword" />
        <SubmitButton>Tìm kiếm</SubmitButton>
      </SearchForm>
      <SubHeading>Kết Quả Tìm Kiếm</SubHeading>
      <Table>
        <colgroup>
          {columnWidths.map((w, i) => (
            <col key={i} style={{ width: w }} />
          ))}
        </colgroup>
        <thead>
          <Row $h={87}>
            {headers.map((h) => (
              <HeadCell key={h}>{h}</HeadCell>
            ))}
          </Row>
        </thead>
        <tbody>
          {students.map((s) => (
            <Row key={s.cells[0]} $h={s.h}>
              {s.cells.map((c, i) => (
                <Cell key={i}>{c}</Cell>
              ))}
            </Row>
          ))}
        </tbody>
      </Table>
    </Container>
    <LaserDot />
  </Page>
);

const SystemTaskbar = () => (
  <Taskbar>
    <Win />
    <SearchBox>
      <svg width="19" height="19" viewBox="0 0 19 19" fill="none" stroke="#e6e6e6" strokeWidth="2">
        <circle cx="8" cy="8" r="6.900" />
        <path d="M13 13l5 5" strokeWidth="2.400" />
      </svg>
      Search
      <Deer />
    </SearchBox>
    {apps.map((a, i) => (
      <AppSlot key={i} $open={a.open} $active={a.active}>
        {a.icon}
        {a.badge && <Badge>{a.badge}</Badge>}
      </AppSlot>
    ))}
    <Tray>
      <svg width="14" height="8" viewBox="0 0 14 8" fill="none" stroke="#fff" strokeWidth="1.8">
        <path d="M.8 7.200L7 1.200l6.200 6" />
      </svg>
      <Language>ENG</Language>
      <TrayIcons>
        <svg width="20" height="16" viewBox="0 0 20 16" fill="none" stroke="#fff" strokeWidth="1.5">
          <path d="M.8 6.200a13 13 0 0 1 18.400 0M3.600 9a9 9 0 0 1 12.800 0M6.300 11.600a5.300 5.300 0 0 1 7.400 0" />
          <circle cx="10" cy="13.700" r="1.600" fill="#fff" stroke="none" />
        </svg>
        <svg width="20" height="18" viewBox="0 0 20 18" fill="none" stroke="#fff" strokeWidth="1.3" strokeLinejoin="round">
          <path d="M1 6.500h3l4-4v13l-4-4H1zM11 6.500a4 4 0 0 1 0 5M13.500 4a7 7 0 0 1 0 10M16 1.500a11 11 0 0 1 0 15" />
        </svg>
        <svg width="20" height="14" viewBox="0 0 20 14">
          <rect x=".8" y=".8" width="16.400" height="12" rx="3" fill="none" stroke="#fff" strokeWidth="1.5" />
          <rect x="3" y="3" width="6" height="7.600" rx="1" fill="#fff" />
          <path d="M18 4.500c1.500 0 2 1 2 2.300s-.5 2.300-2 2.300z" fill="#fff" />
        </svg>
      </TrayIcons>
      <Clock>
        4:07 CH
        <br />
        28/04/2025
      </Clock>
    </Tray>
  </Taskbar>
);

export default function App() {
  return (
    <Screen>
      <GlobalStyle />
      <Tabs />
      <BrowserBar />
      <StudentSearch />
      <SystemTaskbar />
    </Screen>
  );
}
